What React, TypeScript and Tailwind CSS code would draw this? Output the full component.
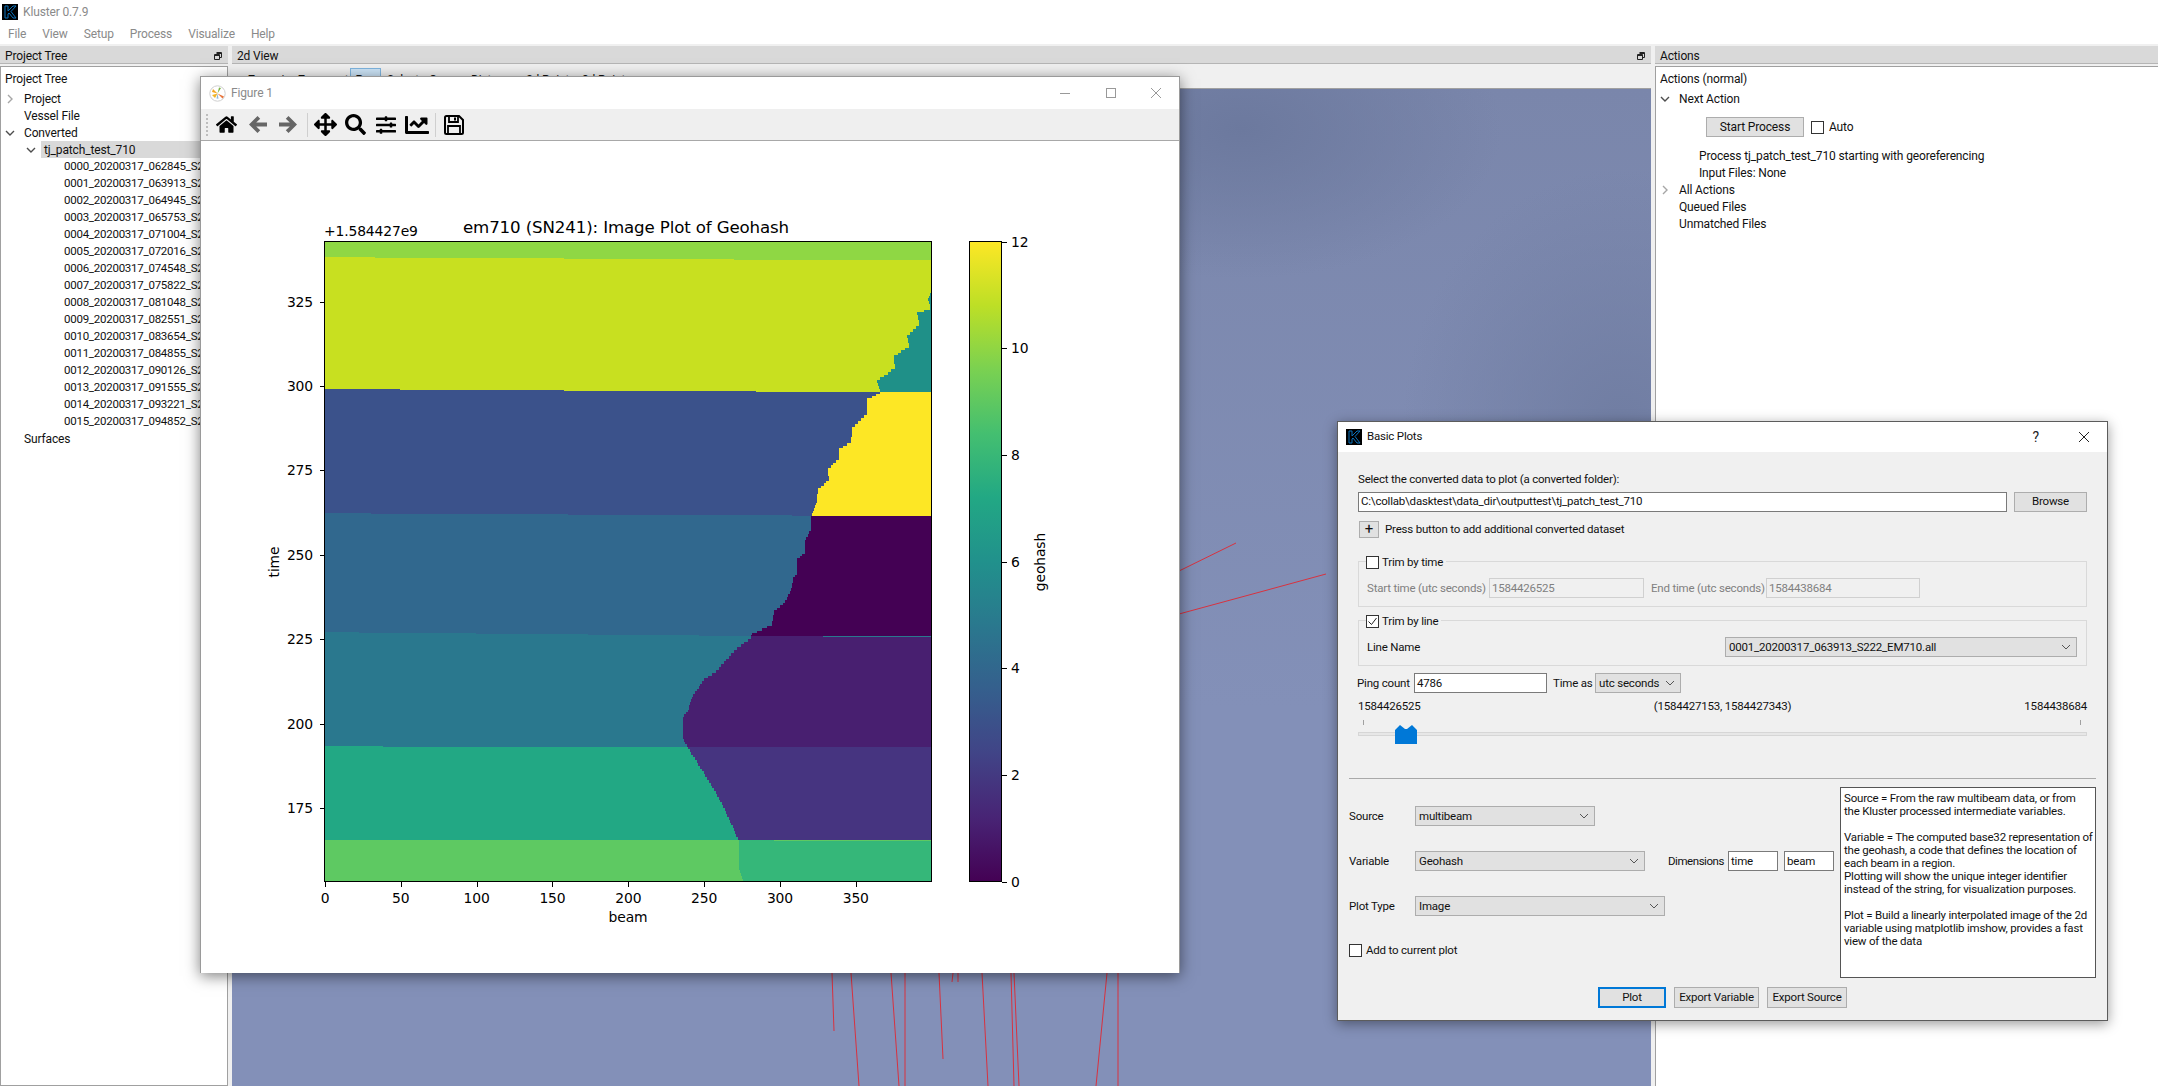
import type { ReactNode } from "react"
import {
  FaArrowsAlt,
  FaChartLine,
  FaHome,
  FaSearch,
  FaSlidersH,
} from "react-icons/fa"

type Pt = [number, number]

const lineFiles = [
  "0000_20200317_062845_S222_EM710.all",
  "0001_20200317_063913_S222_EM710.all",
  "0002_20200317_064945_S222_EM710.all",
  "0003_20200317_065753_S222_EM710.all",
  "0004_20200317_071004_S222_EM710.all",
  "0005_20200317_072016_S222_EM710.all",
  "0006_20200317_074548_S222_EM710.all",
  "0007_20200317_075822_S222_EM710.all",
  "0008_20200317_081048_S222_EM710.all",
  "0009_20200317_082551_S222_EM710.all",
  "0010_20200317_083654_S222_EM710.all",
  "0011_20200317_084855_S222_EM710.all",
  "0012_20200317_090126_S222_EM710.all",
  "0013_20200317_091555_S222_EM710.all",
  "0014_20200317_093221_S222_EM710.all",
  "0015_20200317_094852_S222_EM710.all",
]

const helpText = [
  "Source = From the raw multibeam data, or from",
  "the Kluster processed intermediate variables.",
  "",
  "Variable = The computed base32 representation of",
  "the geohash, a code that defines the location of",
  "each beam in a region.",
  "Plotting will show the unique integer identifier",
  "instead of the string, for visualization purposes.",
  "",
  "Plot = Build a linearly interpolated image of the 2d",
  "variable using matplotlib imshow, provides a fast",
  "view of the data",
]

// red survey lines, page coordinates
const redLines: [number, number, number, number][] = [
  [1179, 571, 1236, 543],
  [1179, 614, 1260, 592],
  [1260, 592, 1326, 574],
  [832, 973, 834, 1031],
  [851, 973, 859, 1086],
  [891, 973, 899, 1086],
  [905, 973, 905, 1086],
  [939, 973, 943, 1059],
  [953, 973, 952, 982],
  [958, 973, 958, 982],
  [982, 973, 988, 1086],
  [1011, 973, 1014, 1086],
  [1014, 973, 1019, 1086],
  [1107, 973, 1096, 1086],
  [1118, 973, 1118, 1086],
]

// crop coordinates of the plot back to page coordinates
const a = (x: number, y: number): Pt => [300 + x / 2.24, 220 + y / 3]
const b = (x: number, y: number): Pt => [300 + x / 2.01, 600 + y / 3]

const stair = (pts: Pt[]) => {
  const out: Pt[] = []
  for (let i = 0; i < pts.length - 1; i++) {
    const [x0, y0] = pts[i]
    const [x1, y1] = pts[i + 1]
    const n = Math.max(1, Math.ceil(Math.abs(y1 - y0) / 3))
    for (let k = 0; k < n; k++) {
      const x = Math.round(x0 + ((x1 - x0) * k) / n)
      out.push([x, y0 + ((y1 - y0) * k) / n], [x, y0 + ((y1 - y0) * (k + 1)) / n])
    }
  }
  return out
}

const poly = (pts: Pt[]) => pts.map((p) => p.join(",")).join(" ")

const band = (top: Pt[]) => poly([...top, [930, 882], [324, 882]])

const tealEdge = stair([
  a(1412, 210), a(1405, 235), a(1410, 262), a(1380, 275), a(1385, 310), a(1358, 345),
  a(1362, 375), a(1328, 405), a(1330, 440), a(1290, 480), a(1298, 516),
])
const yellowEdge = stair([
  a(1298, 516), a(1268, 535), a(1268, 575), a(1235, 620), a(1232, 660), a(1205, 685),
  a(1205, 710), a(1180, 745), a(1183, 775), a(1158, 805), a(1155, 840), a(1142, 888),
])
const darkEdge = stair([
  a(1142, 888), a(1142, 925), a(1128, 960), a(1128, 995), a(1112, 1015), a(1112, 1060),
  a(1102, 1070), a(1098, 1105), a(1085, 1140), a(1060, 1170), a(1055, 1210), a(1010, 1240),
  a(1008, 1252),
])
const purpleEdge = stair([
  b(905, 108), b(870, 150), b(835, 210), b(810, 235), b(785, 290), b(778, 330),
  b(767, 350), b(767, 410), b(778, 440),
])
const indigoEdge = stair([
  b(778, 440), b(795, 480), b(820, 540), b(840, 590), b(860, 650), b(880, 720),
])
const greenEdge = stair([b(880, 720), b(880, 760), b(880, 800), b(890, 845)])

function Chevron({ down, light }: { down?: boolean; light?: boolean }) {
  return (
    <svg width="10" height="10" viewBox="0 0 10 10" className="shrink-0">
      <path
        d={down ? "M1 3l4 4 4-4" : "M3 1l4 4-4 4"}
        fill="none"
        stroke={light ? "#a6a6a6" : "#4d4d4d"}
        strokeWidth="1.4"
      />
    </svg>
  )
}

function KlusterIcon() {
  return (
    <svg width="16" height="16" viewBox="0 0 16 16" className="shrink-0">
      <rect width="16" height="16" fill="#000" />
      <path d="M3 2h3v5l5-5h3L9 7.5l5 6.5h-3L7 9l-1 1v4H3z" fill="none" stroke="#0b72bd" strokeWidth="1" />
    </svg>
  )
}

function FloatIcon() {
  return (
    <svg width="10" height="10" viewBox="0 0 10 10" className="shrink-0">
      <path d="M3.5 1.5h5v5h-2M1.5 3.5h5v5h-5zM1.5 4.5h5M3.5 2.5h5" fill="none" stroke="#222" strokeWidth="1" />
    </svg>
  )
}

function DockTitle({ title, float }: { title: string; float?: boolean }) {
  return (
    <div className="flex h-[18px] items-center justify-between border-b border-[#b5b5b5] bg-[#d9d9d9] pl-[5px] pr-[5px] pt-[2px]">
      <span>{title}</span>
      {float && <FloatIcon />}
    </div>
  )
}

function Row({ indent, chevron, children }: { indent: number; chevron?: ReactNode; children: ReactNode }) {
  return (
    <div className="relative flex h-[17px] items-center whitespace-nowrap" style={{ paddingLeft: indent }}>
      {chevron && <span className="absolute" style={{ left: indent - 19 }}>{chevron}</span>}
      {children}
    </div>
  )
}

function ProjectTree() {
  return (
    <div className="flex w-[228px] shrink-0 flex-col overflow-hidden">
      <DockTitle title="Project Tree" float />
      <div className="mt-[2px] flex-1 overflow-hidden border border-[#a0a0a0] bg-white pt-[3px]">
        <div className="mb-[2px] flex h-[18px] items-center pl-[4px]">Project Tree</div>
        <Row indent={23} chevron={<Chevron light />}>Project</Row>
        <Row indent={23}>Vessel File</Row>
        <Row indent={23} chevron={<Chevron down />}>Converted</Row>
        <div className="relative ml-[40px] flex h-[17px] items-center whitespace-nowrap bg-[#d9d9d9] pl-[3px]">
          <span className="absolute -left-[15px]"><Chevron down /></span>
          tj_patch_test_710
        </div>
        <div className="text-[11.5px] tracking-[-0.25px]">
          {lineFiles.map((f) => (
            <Row key={f} indent={63}>{f}</Row>
          ))}
        </div>
        <Row indent={23}>Surfaces</Row>
      </div>
    </div>
  )
}

function CenterView() {
  return (
    <div className="ml-[4px] flex w-[1419px] shrink-0 flex-col">
      <DockTitle title="2d View" float />
      <div className="mt-[2px] flex h-[23px] shrink-0 items-start border-b border-[#a0a0a0] bg-[#f0f0f0] pl-[16px] pt-[2px] leading-[18px]">
        <span className="w-[50px] pt-[3px]">Zoom in</span>
        <span className="w-[52px] pt-[3px]">Zoom out</span>
        <span className="h-[21px] w-[31px] border border-[#7fb5df] bg-[#cce4f7] pt-[2px] text-center">Pan</span>
        <span className="ml-[6px] w-[42px] pt-[3px]">Select</span>
        <span className="w-[42px] pt-[3px]">Query</span>
        <span className="w-[55px] pt-[3px]">Distance</span>
        <span className="w-[56px] pt-[3px]">2d Points</span>
        <span className="pt-[3px]">3d Points</span>
      </div>
      <div className="flex-1 bg-[radial-gradient(ellipse_260px_150px_at_1010px_40px,#6c799e_0,transparent_100%),radial-gradient(ellipse_220px_260px_at_1390px_340px,#707da2_0,transparent_100%),linear-gradient(180deg,#7a86ab_0,#8390b8_62%,#8390b8_100%)]" />
    </div>
  )
}

function ActionsPanel() {
  return (
    <div className="ml-[4px] flex min-w-0 flex-1 flex-col">
      <DockTitle title="Actions" />
      <div className="mt-[2px] flex-1 border-t border-l border-[#a0a0a0] bg-white pt-[3px]">
        <div className="mb-[2px] flex h-[18px] items-center pl-[4px]">Actions (normal)</div>
        <Row indent={23} chevron={<Chevron down />}>Next Action</Row>
        <div className="mt-[10px] flex items-center pl-[50px]">
          <Btn className="h-[20px] w-[98px]">Start Process</Btn>
          <Check className="ml-[7px]" />
          <span className="ml-[5px]">Auto</span>
        </div>
        <div className="mt-[10px]">
          <Row indent={43}>Process tj_patch_test_710 starting with georeferencing</Row>
          <Row indent={43}>Input Files: None</Row>
          <Row indent={23} chevron={<Chevron light />}>All Actions</Row>
          <Row indent={23}>Queued Files</Row>
          <Row indent={23}>Unmatched Files</Row>
        </div>
      </div>
    </div>
  )
}

function Btn({ className, children }: { className: string; children: ReactNode }) {
  return (
    <div className={`flex shrink-0 items-center justify-center whitespace-nowrap border border-[#adadad] bg-[#e1e1e1] ${className}`}>
      {children}
    </div>
  )
}

function Check({ className = "", checked }: { className?: string; checked?: boolean }) {
  return (
    <div className={`flex h-[13px] w-[13px] shrink-0 items-center justify-center border border-[#333] bg-white ${className}`}>
      {checked && (
        <svg width="11" height="11" viewBox="0 0 11 11">
          <path d="M1.5 5.5l3 3 5-6.5" fill="none" stroke="#222" strokeWidth="1" />
        </svg>
      )}
    </div>
  )
}

function Combo({ className, children }: { className: string; children: ReactNode }) {
  return (
    <div className={`flex h-[20px] shrink-0 items-center justify-between border border-[#adadad] bg-[#e1e1e1] pl-[3px] pr-[5px] ${className}`}>
      <span className="whitespace-nowrap">{children}</span>
      <svg width="10" height="10" viewBox="0 0 10 10">
        <path d="M1 3l4 4 4-4" fill="none" stroke="#555" strokeWidth="1" />
      </svg>
    </div>
  )
}

function Field({ className, children, off }: { className: string; children: ReactNode; off?: boolean }) {
  return (
    <div
      className={`flex shrink-0 items-center whitespace-nowrap pl-[2px] ${off ? "border border-[#d0d0d0] bg-[#f0f0f0] text-[#808080]" : "border border-[#7a7a7a] bg-white"} ${className}`}
    >
      {children}
    </div>
  )
}

function GroupTitle({ checked, title }: { checked?: boolean; title: string }) {
  return (
    <div className="absolute -top-[7px] left-[7px] flex h-[14px] items-center bg-[#f0f0f0] pr-[3px]">
      <Check checked={checked} />
      <span className="ml-[3px]">{title}</span>
    </div>
  )
}

function WinGlyph({ kind, color }: { kind: "min" | "max" | "close" | "help"; color: string }) {
  if (kind === "help") return <span className="text-[14px]" style={{ color }}>?</span>
  return (
    <svg width="12" height="12" viewBox="0 0 12 12">
      {kind === "min" && <path d="M1 6.5h10" stroke={color} />}
      {kind === "max" && <rect x="1.5" y="1.5" width="9" height="9" fill="none" stroke={color} />}
      {kind === "close" && <path d="M1 1l10 10M11 1L1 11" stroke={color} />}
    </svg>
  )
}

function PlotCanvas() {
  const yTicks: [number, string][] = [
    [301.7, "325"], [385.7, "300"], [470, "275"], [554.7, "250"], [639.3, "225"], [723.7, "200"], [808, "175"],
  ]
  const xTicks = [0, 50, 100, 150, 200, 250, 300, 350]
  const cTicks: [number, string][] = [
    [241.7, "12"], [348.4, "10"], [455, "8"], [561.7, "6"], [668.4, "4"], [775, "2"], [881.7, "0"],
  ]
  return (
    <svg viewBox="200 141 979 832" className="h-[832px] w-[979px] font-['DejaVu_Sans',sans-serif]">
      <defs>
        <linearGradient id="viridis" x1="0" y1="1" x2="0" y2="0">
          <stop offset="0" stopColor="#440154" />
          <stop offset="0.1" stopColor="#482475" />
          <stop offset="0.2" stopColor="#414487" />
          <stop offset="0.3" stopColor="#355f8d" />
          <stop offset="0.4" stopColor="#2a788e" />
          <stop offset="0.5" stopColor="#21918c" />
          <stop offset="0.6" stopColor="#22a884" />
          <stop offset="0.7" stopColor="#44bf70" />
          <stop offset="0.8" stopColor="#7ad151" />
          <stop offset="0.9" stopColor="#bddf26" />
          <stop offset="1" stopColor="#fde725" />
        </linearGradient>
      </defs>
      <g shapeRendering="crispEdges">
        <rect x="324" y="242" width="606" height="640" fill="#8fd744" />
        <polygon fill="#c8e020" points={band([a(53, 111), a(165, 111), a(165, 113), a(590, 113), a(590, 116), a(970, 116), a(970, 119), a(1412, 119)])} />
        <polygon fill="#1f9088" points={poly([...tealEdge, a(1412, 518)])} />
        <polygon fill="#3b528b" points={band([a(53, 507), a(222, 507), a(222, 509), a(590, 509), a(590, 512), a(1020, 512), a(1020, 515), a(1412, 515)])} />
        <polygon fill="#fde725" points={poly([...yellowEdge, a(1412, 888), a(1412, 516)])} />
        <polygon fill="#31688e" points={band([a(53, 879), a(157, 879), a(157, 881), a(597, 881), a(597, 884), a(1100, 884), a(1100, 887), a(1412, 887)])} />
        <polygon fill="#440154" points={poly([...darkEdge, a(1412, 1252), a(1412, 888)])} />
        <polygon fill="#2a788e" points={band([b(47, 96), b(117, 96), b(117, 98), b(352, 98), b(352, 101), b(577, 101), b(577, 104), b(800, 104), b(800, 107), b(1267, 107)])} />
        <polygon fill="#481f70" points={poly([...purpleEdge, b(1267, 441), b(1267, 110), b(1050, 110), b(1050, 108)])} />
        <polygon fill="#22a884" points={band([b(47, 438), b(165, 438), b(165, 441), b(1267, 441)])} />
        <polygon fill="#463480" points={poly([...indigoEdge, b(1267, 722), b(1267, 441)])} />
        <polygon fill="#5ec962" points={band([b(47, 720), b(1267, 720)])} />
        <polygon fill="#35b779" points={poly([...greenEdge, b(1267, 845), b(1267, 723), b(950, 723), b(950, 720)])} />
        <rect x="323.5" y="241.5" width="606.5" height="640" fill="none" stroke="#000" />
        <rect x="968.5" y="241.5" width="32" height="640" fill="url(#viridis)" stroke="#000" />
        {yTicks.map(([y]) => (
          <path key={y} d={`M319 ${Math.round(y) + 0.5}h5`} stroke="#000" />
        ))}
        {xTicks.map((t) => (
          <path key={t} d={`M${Math.round(324 + t * 1.5165) + 0.5} 882v5`} stroke="#000" />
        ))}
        {cTicks.map(([y]) => (
          <path key={y} d={`M1001 ${Math.round(y) + 0.5}h5`} stroke="#000" />
        ))}
      </g>
      <g fontSize="13.9" fill="#000">
        {yTicks.map(([y, t]) => (
          <text key={t} x="312" y={y + 5} textAnchor="end">{t}</text>
        ))}
        {xTicks.map((t) => (
          <text key={t} x={324 + t * 1.5165} y="903" textAnchor="middle">{t}</text>
        ))}
        {cTicks.map(([y, t]) => (
          <text key={t} x="1010" y={y + 5}>{t}</text>
        ))}
        <text x="323" y="236">+1.584427e9</text>
        <text x="627" y="922" textAnchor="middle">beam</text>
        <text transform="translate(278 562) rotate(-90)" textAnchor="middle">time</text>
        <text transform="translate(1044 562) rotate(-90)" textAnchor="middle">geohash</text>
      </g>
      <text x="625" y="233" fontSize="16.67" textAnchor="middle" fill="#000">em710 (SN241): Image Plot of Geohash</text>
    </svg>
  )
}

function FigureWindow() {
  return (
    <div className="absolute left-[200px] top-[76px] flex h-[897px] w-[980px] flex-col border-l border-t border-r border-[#9a9a9a] bg-white shadow-[0_3px_14px_rgba(0,0,0,0.5)]">
      <div className="flex h-[32px] shrink-0 items-center bg-white pl-[8px]">
        <svg width="17" height="17" viewBox="0 0 17 17" className="shrink-0">
          <circle cx="8.5" cy="8.5" r="7.7" fill="#fff" stroke="#cfcfcf" />
          <path d="M8.5 8.5L3 7l1-3z" fill="#f5a623" />
          <path d="M8.5 8.5L3 10l3 3z" fill="#f0b429" />
          <path d="M8.5 8.5l5 5 1.5-2z" fill="#e8743b" />
          <path d="M8.5 8.5L12 3l-2-.6z" fill="#7cb342" />
          <path d="M8.5 8.5l-1 5 2 .3z" fill="#8fb8de" />
        </svg>
        <span className="ml-[5px] text-[#8a8a8a]">Figure 1</span>
        <div className="ml-auto flex items-center">
          <WinGlyph kind="min" color="#999" />
          <span className="w-[34px]" />
          <WinGlyph kind="max" color="#999" />
          <span className="w-[33px]" />
          <WinGlyph kind="close" color="#999" />
          <span className="w-[17px]" />
        </div>
      </div>
      <div className="flex h-[32px] shrink-0 items-center border-b border-[#a8a8a8] bg-[#efefef] text-[#000]">
        <span className="ml-[5px] h-[22px] w-[2px] border-l-2 border-dotted border-[#bdbdbd]" />
        <FaHome className="ml-[8px] text-[21px]" />
        <svg width="20" height="19" viewBox="0 0 20 19" className="ml-[11px]">
          <path d="M9.5 1L1 9.5 9.5 18l2.7-2.7-4-3.9H19V7.600H8.200l4-3.900z" fill="#666" />
        </svg>
        <svg width="20" height="19" viewBox="0 0 20 19" className="ml-[10px]">
          <path d="M10.500 1L19 9.500 10.500 18l-2.700-2.700 4-3.900H1V7.600h10.800l-4-3.900z" fill="#666" />
        </svg>
        <span className="ml-[9px] h-[24px] w-px bg-[#cfcfcf]" />
        <FaArrowsAlt className="ml-[6px] text-[23px]" />
        <FaSearch className="ml-[8px] text-[21px]" />
        <FaSlidersH className="ml-[10px] text-[20px]" />
        <FaChartLine className="ml-[9px] text-[24px]" />
        <span className="ml-[6px] h-[24px] w-px bg-[#cfcfcf]" />
        <svg width="20" height="20" viewBox="0 0 20 20" className="ml-[8px]">
          <path d="M1 2.500a1.500 1.500 0 011.500-1.500H15l4 4v12.500a1.500 1.500 0 01-1.500 1.500h-15A1.500 1.500 0 011 17.500z" fill="none" stroke="#000" strokeWidth="2" />
          <path d="M5 2v5h9V2M4 18v-7h12v7" fill="none" stroke="#000" strokeWidth="1.800" />
          <rect x="10" y="2.500" width="2" height="3" fill="#000" />
        </svg>
      </div>
      <PlotCanvas />
    </div>
  )
}

function BasicPlots() {
  return (
    <div className="absolute left-[1337px] top-[421px] flex h-[600px] w-[771px] flex-col whitespace-nowrap border border-[#5c5c5c] bg-[#f0f0f0] text-[11.5px] tracking-[-0.2px] shadow-[0_3px_12px_rgba(0,0,0,0.4)]">
      <div className="flex h-[30px] shrink-0 items-center bg-white pl-[8px]">
        <KlusterIcon />
        <span className="ml-[5px]">Basic Plots</span>
        <div className="ml-auto flex items-center">
          <WinGlyph kind="help" color="#222" />
          <span className="w-[39px]" />
          <WinGlyph kind="close" color="#222" />
          <span className="w-[17px]" />
        </div>
      </div>
      <div className="px-[20px] pt-[19px]">
        <div className="h-[16px] leading-[16px]">Select the converted data to plot (a converted folder):</div>
        <div className="mt-[5px] flex gap-[7px]">
          <Field className="h-[20px] flex-1">C:\collab\dasktest\data_dir\outputtest\tj_patch_test_710</Field>
          <Btn className="h-[20px] w-[73px]">Browse</Btn>
        </div>
        <div className="mt-[9px] flex items-center pl-px">
          <Btn className="h-[17px] w-[20px] text-[15px]">+</Btn>
          <span className="ml-[6px]">Press button to add additional converted dataset</span>
        </div>
        <div className="relative mt-[23px] h-[46px] border border-[#d9d9d9]">
          <GroupTitle title="Trim by time" />
          <div className="flex items-center pl-[8px] pt-[16px] text-[#808080]">
            <span className="w-[122px]">Start time (utc seconds)</span>
            <Field off className="h-[20px] w-[155px]">1584426525</Field>
            <span className="ml-[7px] w-[115px]">End time (utc seconds)</span>
            <Field off className="h-[20px] w-[154px]">1584438684</Field>
          </div>
        </div>
        <div className="relative mt-[13px] h-[46px] border border-[#d9d9d9]">
          <GroupTitle checked title="Trim by line" />
          <div className="flex items-center justify-between pl-[8px] pr-[9px] pt-[16px]">
            <span>Line Name</span>
            <Combo className="w-[352px]">0001_20200317_063913_S222_EM710.all</Combo>
          </div>
        </div>
        <div className="-ml-px mt-[7px] flex items-center">
          <span className="w-[57px]">Ping count</span>
          <Field className="h-[20px] w-[133px]">4786</Field>
          <span className="ml-[6px] w-[42px]">Time as</span>
          <Combo className="w-[86px]">utc seconds</Combo>
        </div>
        <div className="mt-[5px] flex h-[16px] items-center justify-between leading-[16px]">
          <span>1584426525</span>
          <span>(1584427153, 1584427343)</span>
          <span>1584438684</span>
        </div>
        <div className="relative mt-[5px] h-[25px]">
          <span className="absolute left-[5px] top-px h-[5px] w-px bg-[#a0a0a0]" />
          <span className="absolute right-[6px] top-px h-[5px] w-px bg-[#a0a0a0]" />
          <span className="absolute inset-x-0 top-[13px] h-[4px] border border-[#d6d6d6] bg-[#e7e7e7]" />
          <svg width="22" height="19" viewBox="0 0 22 19" className="absolute left-[37px] top-[6px]">
            <path d="M0 19V5l5-5 5 4h2l5-4 5 5v14z" fill="#0078d7" />
          </svg>
        </div>
      </div>
      <div className="mx-[11px] mt-[34px] h-px shrink-0 bg-[#a9a9a9]" />
      <div className="mt-[8px] flex h-[191px] shrink-0 px-[11px]">
        <div className="w-[491px] shrink-0 pt-[19px]">
          <div className="flex items-center">
            <span className="w-[66px]">Source</span>
            <Combo className="w-[180px]">multibeam</Combo>
          </div>
          <div className="mt-[25px] flex items-center">
            <span className="w-[66px]">Variable</span>
            <Combo className="w-[230px]">Geohash</Combo>
            <span className="ml-[23px] w-[60px] tracking-[-0.45px]">Dimensions</span>
            <Field className="h-[20px] w-[50px]">time</Field>
            <Field className="ml-[6px] h-[20px] w-[50px]">beam</Field>
          </div>
          <div className="mt-[25px] flex items-center">
            <span className="w-[66px]">Plot Type</span>
            <Combo className="w-[250px]">Image</Combo>
          </div>
          <div className="mt-[26px] flex h-[16px] items-center">
            <Check />
            <span className="ml-[4px]">Add to current plot</span>
          </div>
        </div>
        <div className="w-[256px] shrink-0 border border-[#555] bg-white pl-[3px] pt-[4px] leading-[13px]">
          {helpText.map((t, i) => (
            <div key={i} className="h-[13px]">{t}</div>
          ))}
        </div>
      </div>
      <div className="mt-[9px] flex gap-[8px] pl-[260px]">
        <div className="flex h-[21px] w-[68px] items-center justify-center border-2 border-[#0078d7] bg-[#e1e1e1]">Plot</div>
        <Btn className="h-[21px] w-[85px]">Export Variable</Btn>
        <Btn className="h-[21px] w-[80px]">Export Source</Btn>
      </div>
    </div>
  )
}

export default function App() {
  return (
    <div className="relative flex h-[1086px] w-[2158px] flex-col overflow-hidden bg-[#f0f0f0] font-['Roboto',sans-serif] text-[12px] tracking-[-0.14px] text-[#111]">
      {/* Main window chrome */}
      <div className="flex h-[24px] shrink-0 items-center bg-white pl-[2px]">
        <KlusterIcon />
        <span className="ml-[5px] text-[#8a8a8a]">Kluster 0.7.9</span>
      </div>
      <div className="flex h-[20px] shrink-0 items-center gap-[16px] bg-white pl-[8px] text-[#8a8a8a]">
        <span>File</span>
        <span>View</span>
        <span>Setup</span>
        <span>Process</span>
        <span>Visualize</span>
        <span>Help</span>
      </div>
      <div className="flex min-h-0 flex-1 pt-[2px]">
        <ProjectTree />
        <CenterView />
        <ActionsPanel />
      </div>

      {/* Survey lines drawn in the 3d view */}
      <svg className="absolute left-0 top-0 h-[1086px] w-[2158px]" viewBox="0 0 2158 1086">
        {redLines.map(([x1, y1, x2, y2], i) => (
          <line key={i} x1={x1} y1={y1} x2={x2} y2={y2} stroke="#d8323f" strokeWidth="1" />
        ))}
      </svg>

      <FigureWindow />
      <BasicPlots />
    </div>
  )
}
